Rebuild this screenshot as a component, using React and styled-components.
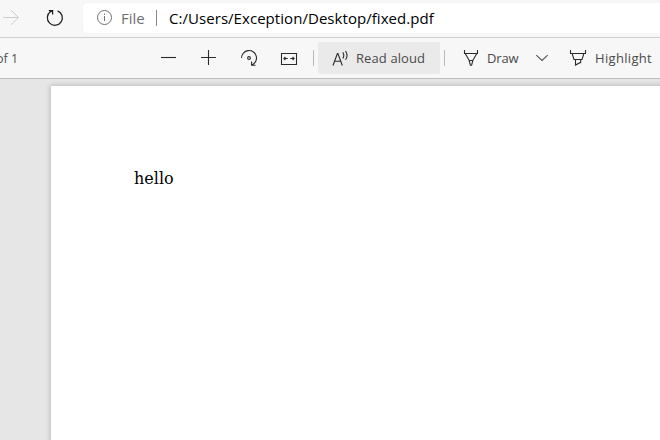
import React from "react";
import styled, { createGlobalStyle } from "styled-components";

const GlobalStyle = createGlobalStyle`
  * { box-sizing: border-box; }
  body { margin: 0; overflow: hidden; background: #f7f7f7; }
`;

const Window = styled.div`
  display: flex;
  flex-direction: column;
  width: 660px;
  height: 440px;
  overflow: hidden;
  font-family: "Open Sans", "Noto Sans", sans-serif;
`;

const NavBar = styled.header`
  display: flex;
  align-items: flex-start;
  flex: none;
  height: 38px;
  padding-top: 3px;
  background: #f7f7f7;
  border-bottom: 1px solid #cfcfcf;
`;

const NavIcon = styled.svg`
  display: block;
  flex: none;
  width: ${(p) => p.$width}px;
  height: 30px;
  fill: none;
  stroke: ${(p) => p.$color};
  stroke-width: ${(p) => p.$weight || 1};
`;

const AddressBar = styled.div`
  display: flex;
  align-items: center;
  flex: 1;
  height: 30px;
  padding-left: 14px;
  background: #fff;
  border-radius: 4px 0 0 4px;
  box-shadow: 0 0 2px rgba(0, 0, 0, 0.06);
`;

const Scheme = styled.span`
  width: 35px;
  margin-left: 9px;
  font-size: 15px;
  line-height: 30px;
  color: #707070;
  white-space: nowrap;
`;

const AddressDivider = styled.span`
  width: 1px;
  height: 16px;
  background: #8a8a8a;
`;

const Url = styled.span`
  margin-left: 12px;
  font-size: 15px;
  line-height: 30px;
  letter-spacing: ${(p) => p.$tracking}px;
  color: #000;
  white-space: nowrap;
`;

const Toolbar = styled.div`
  display: flex;
  align-items: center;
  flex: none;
  height: 41px;
  background: #f7f7f7;
  border-bottom: 1px solid #bdbdbd;
`;

const PageCount = styled.span`
  width: 164px;
  margin-left: -4px;
  font-size: 12.5px;
  color: #505050;
  white-space: nowrap;
`;

const ToolIcon = styled.svg`
  display: block;
  flex: none;
  width: ${(p) => p.$width || 18}px;
  height: 20px;
  margin-right: ${(p) => p.$gap || 0}px;
  fill: none;
  stroke: ${(p) => p.$color || "#2b2b2b"};
  stroke-width: 1.1;
`;

const Separator = styled.span`
  flex: none;
  width: 1px;
  height: 16px;
  background: #b9b9b9;
`;

const ToolButton = styled.div`
  display: flex;
  align-items: center;
  flex: none;
  width: ${(p) => p.$width}px;
  height: 32px;
  padding-left: ${(p) => p.$inset || 0}px;
  margin-left: ${(p) => p.$offset || 0}px;
  margin-right: ${(p) => p.$after || 0}px;
  border-radius: 2px;
  background: ${(p) => (p.$active ? "#eaeaea" : "transparent")};
`;

const Label = styled.span`
  font-size: 13px;
  line-height: 20px;
  letter-spacing: ${(p) => p.$tracking || 0}px;
  color: #4a4a4a;
  white-space: nowrap;
`;

const Viewer = styled.main`
  flex: 1;
  min-height: 0;
  padding: 7px 0 0 51px;
  background: #e6e6e6;
`;

const Page = styled.article`
  width: 700px;
  height: 500px;
  padding: 82px 0 0 83px;
  background: #fff;
  box-shadow: 0 0 5px 1px rgba(0, 0, 0, 0.18);
`;

const DocumentText = styled.p`
  margin: 0;
  font-family: "DejaVu Serif", serif;
  font-size: 16px;
  line-height: 22px;
  color: #000;
`;

export default function App() {
  return (
    <Window>
      <GlobalStyle />
      <NavBar>
        <NavIcon $width={36} $color="#cdcdcd" viewBox="0 0 36 30">
          <path d="M3 14.5H18.5M11 7.2l7.5 7.3-7.5 7.3" />
        </NavIcon>
        <NavIcon $width={47} $color="#1f1f1f" $weight={1.25} viewBox="36 0 47 30">
          <path d="M57.6 7.8A7.5 7.5 0 1 1 50.6 8.6L52.6 7.6M48.8 7.5H52.6V11.6" />
        </NavIcon>
        <AddressBar>
          <NavIcon $width={15} $color="#707070" viewBox="0 0 15 30">
            <circle cx="7.5" cy="14.5" r="7" />
            <path d="M7.5 13v5M7.5 10.5v1.4" />
          </NavIcon>
          <Scheme>File</Scheme>
          <AddressDivider />
          <Url $tracking={0.05}>C:/Users/Exception/Desktop/fixed.pdf</Url>
        </AddressBar>
      </NavBar>
      <Toolbar>
        <PageCount>of 1</PageCount>
        <ToolIcon $gap={22} viewBox="0 0 18 20">
          <path d="M1 9.5h15" />
        </ToolIcon>
        <ToolIcon $gap={22} viewBox="0 0 18 20">
          <path d="M1 9.5h15M8.5 2v15" />
        </ToolIcon>
        <ToolIcon $gap={22} viewBox="0 0 18 20">
          <path d="M1.5 9.9A7.5 7.5 0 1 1 12 16.9M11.6 13.6V17.3H15.5" />
          <circle cx="9" cy="10" r="1.4" />
        </ToolIcon>
        <ToolIcon $gap={15} viewBox="0 0 18 20">
          <path d="M1.5 5.5h15v11h-15zM3.8 10.5h4M10.2 10.5h4M5.4 9L3.9 10.5l1.5 1.5M12.6 9l1.5 1.5-1.5 1.5" />
        </ToolIcon>
        <Separator />
        <ToolButton $active $width={122} $inset={14} $offset={4} $after={4}>
          <ToolIcon $width={17} $gap={7} viewBox="0 0 17 20">
            <path d="M1 17.5L5.4 5.5h.5l4.4 12M2.6 13.3h6.1M10.8 4.4q2 3 0 6M13.5 3q3.1 4.4 0 8.8" />
          </ToolIcon>
          <Label $tracking={0.1}>Read aloud</Label>
        </ToolButton>
        <Separator />
        <ToolButton $width={90} $inset={18}>
          <ToolIcon $width={17} $gap={7} viewBox="0 0 17 20">
            <path d="M1.5 2v3.5h13V2M2.2 5.5l4 7h3.6l4-7M6.2 12.5l1.2 4.8h1.2l1.2-4.8" />
          </ToolIcon>
          <Label $tracking={-0.15}>Draw</Label>
        </ToolButton>
        <ToolIcon $width={15} $gap={19} $color="#555" viewBox="0 0 15 20">
          <path d="M1.3 7.2L7 12.5l5.7-5.3" />
        </ToolIcon>
        <ToolButton $width={91}>
          <ToolIcon $width={18} $gap={8} viewBox="0 0 18 20">
            <path d="M1.5 2v3.5h15V2M3.5 5.5v1.5l1.5 4.5h8l1.5-4.5V5.5M6.5 11.5v5.6l5.2-2.8v-2.8" />
          </ToolIcon>
          <Label $tracking={0.32}>Highlight</Label>
        </ToolButton>
      </Toolbar>
      <Viewer>
        <Page>
          <DocumentText>hello</DocumentText>
        </Page>
      </Viewer>
    </Window>
  );
}
